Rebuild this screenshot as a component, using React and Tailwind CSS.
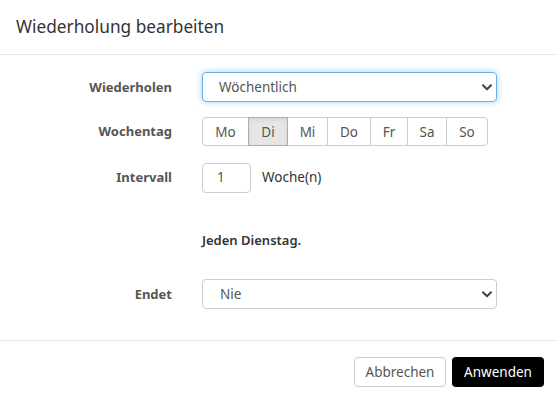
import React from "react";

function Chevron() {
  return (
    <svg width="10" height="7" viewBox="0 0 10 7" className="shrink-0">
      <path d="M1 1.2 L5 5.2 L9 1.2" fill="none" stroke="#444" strokeWidth="2" strokeLinecap="round" strokeLinejoin="round" />
    </svg>
  );
}

const days = [
  { l: "Mo", w: "w-[47px]" },
  { l: "Di", w: "w-[40px]", active: true },
  { l: "Mi", w: "w-[41px]" },
  { l: "Do", w: "w-[44px]" },
  { l: "Fr", w: "w-[38px]" },
  { l: "Sa", w: "w-[40px]" },
  { l: "So", w: "w-[42px]" },
];

export default function App() {
  return (
    <div
      className="w-[557px] h-[401px] bg-white flex flex-col text-[13.5px] text-[#333]"
      style={{ fontFamily: '"Noto Sans", "Open Sans", sans-serif' }}
    >
      <div className="h-[55px] shrink-0 border-b border-[#e5e5e5] flex items-center px-[16px]">
        <h4 className="text-[17.25px] text-[#333] leading-none -mt-[1px]">Wiederholung bearbeiten</h4>
      </div>

      <div className="flex-1 pt-[17px] grid grid-cols-[172px_1fr] gap-x-[30px] content-start">
        <div className="h-[30px] pt-px flex items-center justify-end font-bold text-[#555] text-[13px]">Wiederholen</div>
        <div className="w-[295px] h-[30px] pt-px rounded-[4px] border border-[#66afe9] shadow-[0_0_6px_rgba(102,175,233,0.6)] flex items-center justify-between pl-[16px] pr-[4px] text-[#555]">
          <span>Wöchentlich</span>
          <Chevron />
        </div>

        <div className="mt-[15px] h-[29px] pt-px flex items-center justify-end font-bold text-[#555] text-[13px]">Wochentag</div>
        <div className="mt-[15px] flex h-[29px]">
          {days.map((d, i) => (
            <div
              key={d.l}
              className={
                "flex items-center justify-center pt-px border text-[#555] -ml-px first:ml-0 " +
                d.w +
                (i === 0 ? " rounded-l-[4px]" : "") +
                (i === days.length - 1 ? " rounded-r-[4px]" : "") +
                (d.active
                  ? " bg-[#e6e6e6] border-[#adadad] shadow-[inset_0_2px_4px_rgba(0,0,0,0.08)] relative z-10"
                  : " bg-white border-[#ccc]")
              }
            >
              {d.l}
            </div>
          ))}
        </div>

        <div className="mt-[16px] h-[30px] pt-px flex items-center justify-end font-bold text-[#555] text-[13px]">Intervall</div>
        <div className="mt-[16px] flex items-center h-[30px] pt-px">
          <div className="w-[49px] h-[30px] rounded-[4px] border border-[#ccc] flex items-center pl-[14px] text-[#555]">1</div>
          <span className="ml-[11px] text-[#333]">Woche(n)</span>
        </div>

        <div className="mt-[38px] h-[20px]" />
        <div className="mt-[38px] h-[20px] pt-px flex items-center font-semibold text-[#333] text-[13px]">Jeden Dienstag.</div>

        <div className="mt-[29px] h-[30px] pt-px flex items-center justify-end font-bold text-[#555] text-[13px]">Endet</div>
        <div className="mt-[29px] w-[295px] h-[30px] pt-px rounded-[4px] border border-[#ccc] flex items-center justify-between pl-[17px] pr-[4px] text-[#555]">
          <span>Nie</span>
          <Chevron />
        </div>
      </div>

      <div className="h-[61px] shrink-0 border-t border-[#e5e5e5] flex items-start justify-end pt-[16px] pr-[13px] gap-[6px]">
        <button className="w-[92px] h-[30px] pt-px rounded-[4px] border border-[#ccc] bg-white text-[#555] text-[13.5px] flex items-center justify-center">
          Abbrechen
        </button>
        <button className="w-[92px] h-[30px] pt-px rounded-[4px] bg-black text-white text-[13.5px] flex items-center justify-center">
          Anwenden
        </button>
      </div>
    </div>
  );
}
